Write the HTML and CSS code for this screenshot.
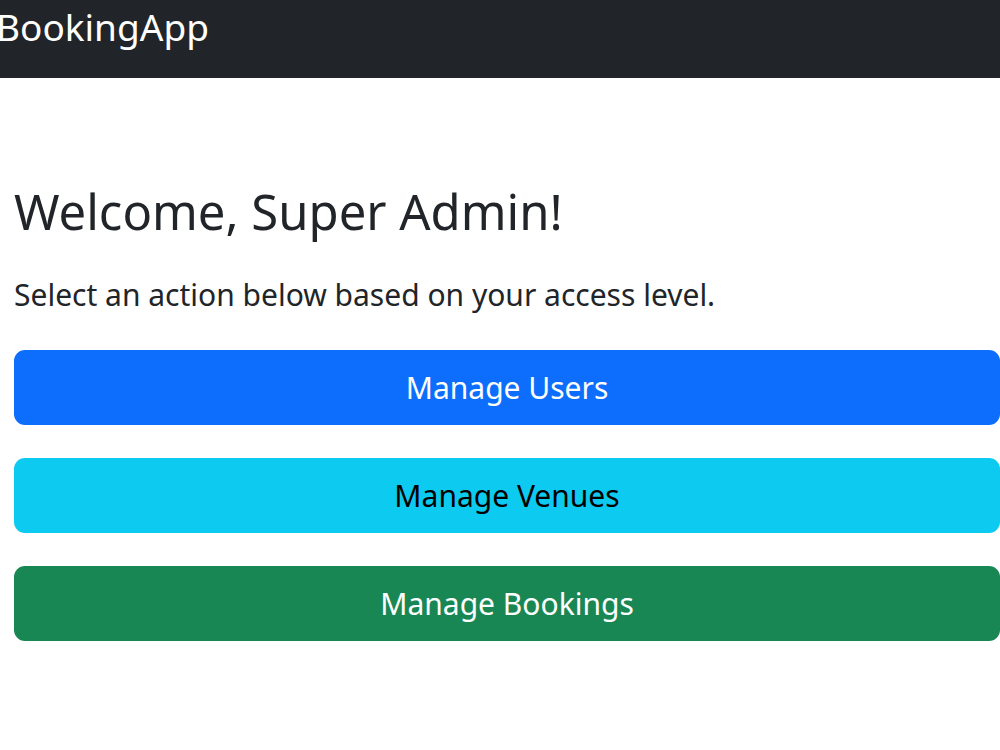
FILE: index.html
```html
<!DOCTYPE html>
<html lang="en">

<head>
    <meta charset="UTF-8">
    <meta name="viewport" content="width=device-width, initial-scale=1.0">
    <title>BookingApp</title>
    <link rel="stylesheet" href="styles.css">
</head>

<body>
    <nav class="navbar">
        <a class="brand" href="#">BookingApp</a>
    </nav>
    <main class="container">
        <h1 class="title">Welcome, Super Admin!</h1>
        <p class="lead">Select an action below based on your access level.</p>
        <div class="actions">
            <a class="btn btn-primary" href="#">Manage Users</a>
            <a class="btn btn-info" href="#">Manage Venues</a>
            <a class="btn btn-success" href="#">Manage Bookings</a>
        </div>
    </main>
</body>

</html>
```

FILE: styles.css
```css
* {
    margin: 0;
    padding: 0;
    box-sizing: border-box;
}

body {
    font-family: "Noto Sans", "Open Sans", sans-serif;
    color: #212529;
    background-color: #fff;
    width: 1000px;
}

.navbar {
    display: flex;
    align-items: flex-start;
    height: 78px;
    background-color: #212529;
}

.brand {
    margin-left: -4px;
    font-size: 37px;
    line-height: 54px;
    color: #fff;
    text-decoration: none;
}

.container {
    padding: 100px 0 0 14px;
}

.title {
    font-size: 49px;
    font-weight: 400;
    line-height: 66px;
    margin-bottom: 29px;
}

.lead {
    font-size: 30px;
    line-height: 44px;
    margin-bottom: 33px;
}

.actions {
    display: flex;
    flex-direction: column;
    gap: 33px;
}

.btn {
    display: block;
    height: 75px;
    line-height: 75px;
    text-align: center;
    font-size: 30px;
    border-radius: 11px;
    text-decoration: none;
}

.btn-primary {
    background-color: #0d6efd;
    color: #fff;
}

.btn-info {
    background-color: #0dcaf0;
    color: #000;
}

.btn-success {
    background-color: #198754;
    color: #fff;
}
```
